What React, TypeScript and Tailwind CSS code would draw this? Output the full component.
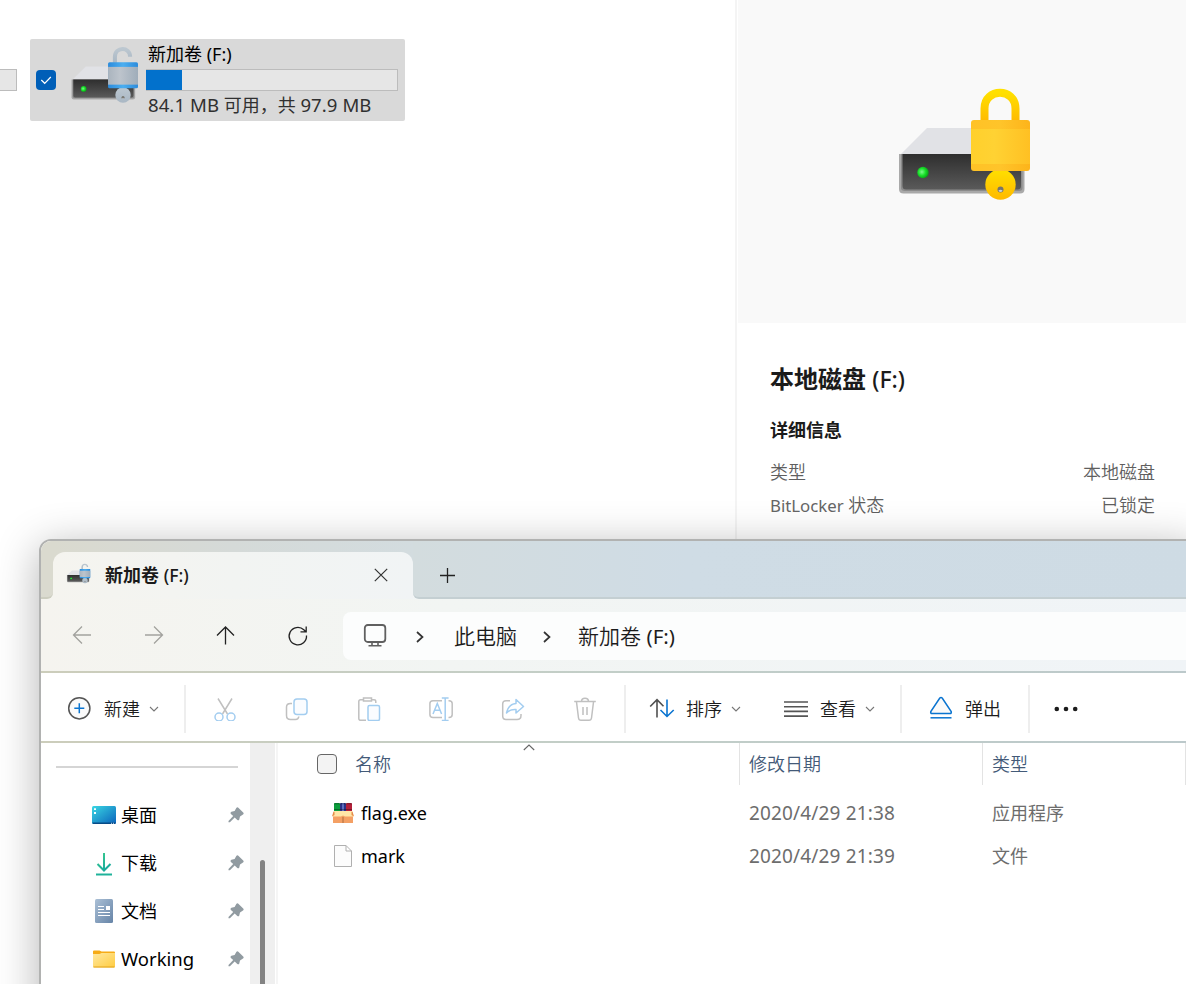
import type { ReactNode } from "react";

const FONT = "font-['Noto_Sans','Noto_Sans_CJK_SC',sans-serif]";

/* Latin runs have their own size next to the Chinese glyphs. */
function L({ children, className = "text-[0.98em] font-normal" }: { children: ReactNode; className?: string }) {
  return <span className={className}>{children}</span>;
}

function DriveIcon({ id, open, className }: { id: string; open: boolean; className: string }) {
  return (
    <svg viewBox="16 16 136 118" className={className} fill="none">
      <defs>
        <linearGradient id={`${id}-b`} x1="0" y1="0" x2="0" y2="1">
          <stop offset="0" stopColor="#2e2e2e" />
          <stop offset="1" stopColor="#5a5a5a" />
        </linearGradient>
        <linearGradient id={`${id}-s`} x1="0" y1="0" x2="0" y2="1">
          <stop offset="0" stopColor={open ? "#bcc7d0" : "#ffe000"} />
          <stop offset="1" stopColor={open ? "#a9b7c4" : "#ffb900"} />
        </linearGradient>
        <linearGradient id={`${id}-l`} x1="0" y1="0" x2="1" y2="0">
          <stop offset="0" stopColor={open ? "#aab4be" : "#ffd02c"} />
          <stop offset="0.4" stopColor={open ? "#bdc4cc" : "#ffd233"} />
          <stop offset="1" stopColor={open ? "#9fadba" : "#ffc023"} />
        </linearGradient>
        <linearGradient id={`${id}-e`} x1="0" y1="0" x2="1" y2="0">
          <stop offset="0" stopColor={open ? "#2b8bdc" : "#ffc226"} />
          <stop offset="0.5" stopColor={open ? "#4baef0" : "#ffc42a"} />
          <stop offset="1" stopColor={open ? "#2b8bdc" : "#fdb41a"} />
        </linearGradient>
        <radialGradient id={`${id}-d`} cx="0.4" cy="0.45" r="0.6">
          <stop offset="0" stopColor="#7dfa8a" />
          <stop offset="0.55" stopColor="#17df28" />
          <stop offset="1" stopColor="#0c9c18" />
        </radialGradient>
      </defs>
      <path d="M47 58H120L143 84H21Z" fill="#e1e2e6" />
      <path d="M19 84H144.500V119Q144.500 123.500 140 123.500H23.500Q19 123.500 19 119Z" fill="#a9a9a9" />
      <path d="M21 84H142.500V118Q142.500 121 139 121H25Q21 121 21 118Z" fill="#8b8b8b" />
      <path d="M22.500 84H141V116Q141 119.500 137.500 119.500H26Q22.500 119.500 22.500 116Z" fill={`url(#${id}-b)`} />
      <circle cx="43" cy="102.500" r="5.700" fill={`url(#${id}-d)`} />
      {open ? (
        <path d="M104.500 51V39.500C104.500 18.500 134.500 18.500 134.500 39" stroke={`url(#${id}-s)`} strokeWidth="8" />
      ) : (
        <path d="M104.500 52V38.500C104.500 17.500 135.500 17.500 135.500 38.500V52" stroke={`url(#${id}-s)`} strokeWidth="8" />
      )}
      <circle cx="120.500" cy="114.500" r="15.200" fill={`url(#${id}-s)`} />
      <circle cx="120.500" cy="119.500" r="3" fill="#75736c" />
      <path d="M118.300 120.800Q120.500 118.700 122.700 120.800Q120.500 123.300 118.300 120.800" fill="#cbd0d8" />
      <rect x="91" y="50" width="59" height="51" rx="3" fill={`url(#${id}-e)`} />
      <path d="M91 59H150V94H91Z" fill={`url(#${id}-l)`} />
    </svg>
  );
}

function Chevron({ className }: { className: string }) {
  return (
    <svg viewBox="0 0 10 10" className={className} fill="none" stroke="#777" strokeWidth="1.100">
      <path d="M1 3L5 7L9 3" />
    </svg>
  );
}

function Pin() {
  return (
    <svg viewBox="0 0 16 16" className="ml-auto h-4 w-4 shrink-0" fill="#919ba1">
      <path d="M8.300 0.900Q9.400 -0.300 10.600 0.900L15.200 5.400Q16.200 6.600 15 7.400L12 9.400L11.200 12.700Q10.500 13.900 9.300 12.900L6.700 10.600L1.900 15.300H0.500V13.900L5.200 9.100L2.900 6.900Q2 5.500 3.400 4.800L6.600 4Z" />
    </svg>
  );
}

function SideItem({ icon, children }: { icon: ReactNode; children: ReactNode }) {
  return (
    <div className="flex h-12 items-center pl-[51px] pr-[6px]">
      <div className="flex w-6 shrink-0 justify-center">{icon}</div>
      <div className="ml-[5px] text-[18px] leading-[20px] text-black">{children}</div>
      <Pin />
    </div>
  );
}

const Desktop = () => (
  <svg viewBox="0 0 24 18" className="h-[18px] w-6">
    <defs>
      <linearGradient id="desk" x1="0" y1="0" x2="1" y2="1">
        <stop offset="0" stopColor="#3ad7e3" />
        <stop offset="1" stopColor="#0a62bb" />
      </linearGradient>
    </defs>
    <rect width="24" height="18" rx="1.500" fill="url(#desk)" />
    <path d="M0.500 16.500H23.500V17Q23.500 18 22.500 18H1.500Q0.500 18 0.500 17Z" fill="#084b86" />
    <path d="M2 2.200H4V4H2ZM2 6H4V8H2Z" fill="#f4ffff" />
    <path d="M19 17.300H20M21 17.300H22" stroke="#fff" strokeWidth="0.800" />
  </svg>
);

const Download = () => (
  <svg viewBox="0 0 18 24" className="mt-px h-6 w-[18px]" fill="none" strokeWidth="2">
    <defs>
      <linearGradient id="down" x1="0" y1="0" x2="18" y2="24" gradientUnits="userSpaceOnUse">
        <stop offset="0" stopColor="#3fd08a" />
        <stop offset="1" stopColor="#089aa5" />
      </linearGradient>
    </defs>
    <path d="M9.010 1L9 18M2.500 12L9 18.500L15.500 12" stroke="url(#down)" />
    <path d="M1 21.500H17V23.500H1Z" fill="#1fb29a" />
  </svg>
);

const Document = () => (
  <svg viewBox="0 0 18 24" className="h-6 w-[18px]">
    <defs>
      <linearGradient id="doc" x1="0" y1="0" x2="1" y2="1">
        <stop offset="0" stopColor="#abc0d6" />
        <stop offset="1" stopColor="#6684a7" />
      </linearGradient>
    </defs>
    <rect width="18" height="24" rx="1.500" fill="url(#doc)" />
    <path d="M3 7.500H9M3 10.500H9M3 13.500H15M3 16.500H15" stroke="#fff" strokeWidth="1.100" />
    <rect x="11" y="7" width="4" height="4" fill="#fff" />
  </svg>
);

const Folder = () => (
  <svg viewBox="0 0 22 18" className="h-[18px] w-[22px]">
    <defs>
      <linearGradient id="fold" x1="0" y1="0" x2="1" y2="1">
        <stop offset="0" stopColor="#ffe8a0" />
        <stop offset="1" stopColor="#ffcc40" />
      </linearGradient>
    </defs>
    <path d="M0 1.500Q0 0.500 1 0.500H6.500L8.500 1.500H21Q22 1.500 22 2.500V16H0Z" fill="#f6ab16" />
    <path d="M0 4H6.500L8.500 3H22V16.500Q22 17.500 21 17.500H1Q0 17.500 0 16.500Z" fill="url(#fold)" />
    <path d="M0.500 17H21.500" stroke="#e1a21d" />
  </svg>
);

const Archive = () => (
  <svg viewBox="0 0 22 20" className="h-5 w-[22px]">
    <rect x="2" y="0" width="6" height="10" rx="1" fill="#0b9d3c" />
    <rect x="8" y="0" width="6" height="10" rx="1" fill="#2b3287" />
    <rect x="10" y="0" width="2" height="10" fill="#5d6ec0" />
    <rect x="14" y="0" width="6" height="10" rx="1" fill="#b4203a" />
    <path d="M2 0.800H20M2 6.500H20" stroke="#000" strokeOpacity="0.300" />
    <path d="M1 12H21V20H1Z" fill="#f4a064" />
    <path d="M2 8H20L21.500 13.500H13L11 12.500L9 13.500H0.500Z" fill="#ffe6a8" />
    <path d="M0 13.500L1.500 8.500L2.500 9V12ZM22 13.500L20.500 8.500L19.500 9V12Z" fill="#e78b48" />
    <path d="M11 14V20" stroke="#ad6c3d" />
  </svg>
);

const FileIcon = () => (
  <svg viewBox="0 0 18 22" className="h-[22px] w-[18px]" fill="#fcfcfc" stroke="#b0b0b0">
    <path d="M0.500 0.500H12L17.500 6V21.500H0.500ZM12 0.500V6H17.500" />
  </svg>
);

function IconCell({ children }: { children: ReactNode }) {
  return (
    <div className="flex w-[72px] shrink-0 justify-center">
      <svg viewBox="0 0 24 24" className="h-6 w-6" fill="none" strokeWidth="1.500" stroke="#c0c0c0">
        {children}
      </svg>
    </div>
  );
}

const Divider = () => <div className="h-12 w-[2px] shrink-0 bg-[#eeeeee]" />;

function FileRow({ icon, name, date, type }: { icon: ReactNode; name: string; date: string; type: string }) {
  return (
    <div className="flex h-[43px] items-center text-[18px] leading-[20px] text-[#6d6d6d]">
      <div className="flex w-[29px] shrink-0 justify-center pt-px">{icon}</div>
      <div className="ml-[4px] w-[388px] text-black"><L className="text-[18px]">{name}</L></div>
      <div className="w-[243px]"><L className="text-[19px] tracking-[0.15px]">{date}</L></div>
      <div>{type}</div>
    </div>
  );
}

function DriveTile() {
  return (
    <div className="flex h-[82px] w-[375px] rounded-[2px] bg-[#d9d9d9]">
      <div className="ml-[6px] mt-[31px] flex h-5 w-5 items-center justify-center rounded-[4px] bg-[#005fb8]">
        <svg viewBox="0 0 12 10" className="h-[10px] w-3" fill="none" stroke="#fff" strokeWidth="1.200">
          <path d="M1.300 5L4.700 8.300L10.800 2" />
        </svg>
      </div>
      <DriveIcon id="tile" open className="ml-[14px] mt-[6px] h-[60px] w-[69px]" />
      <div className="ml-[7px] flex flex-col">
        <div className="ml-[2px] mt-[6px] h-[18px] text-[18px] leading-[18px] text-black">新加卷 <L className="text-[18px]">(F:)</L></div>
        <div className="mt-[6px] h-[22px] w-[252px] border border-[#bcbcbc] border-l-0 bg-[#e6e6e6]">
          <div className="h-full w-9 bg-[#0271cc]" />
        </div>
        <div className="ml-[2px] mt-[5px] text-[18px] leading-[18px] whitespace-nowrap text-[#303030]">
          <L className="text-[18.600px] tracking-[0.05px]">84.1 MB</L> 可用，共 <L className="text-[18.600px] tracking-[0.05px]">97.9 MB</L>
        </div>
      </div>
    </div>
  );
}

function DetailsPane() {
  return (
    <div className="flex w-[451px] shrink-0 flex-col border-l-2 border-[#f4f4f4]">
      <div className="ml-px flex h-[323px] bg-[#f9f9f9]">
        <DriveIcon id="big" open={false} className="ml-[158px] mt-[86px] h-[118px] w-[136px]" />
      </div>
      <div className="ml-[33px] mr-[31px] flex flex-col">
        <div className="mt-[44px] text-[24px] leading-[24px] font-bold text-[#1b1b1b]">
          本地磁盘 <L className="text-[23px] font-medium">(F:)</L>
        </div>
        <div className="mt-[30px] text-[18px] leading-[18px] font-bold text-[#1b1b1b]">详细信息</div>
        <div className="mt-[24px] flex justify-between text-[18px] leading-[18px] font-[350] text-[#5f5f5f]">
          <span>类型</span>
          <span>本地磁盘</span>
        </div>
        <div className="mt-[15px] flex justify-between text-[18px] leading-[18px] font-[350] text-[#5f5f5f]">
          <span><L className="text-[16.800px] font-normal text-[#666]">BitLocker</L> 状态</span>
          <span>已锁定</span>
        </div>
      </div>
    </div>
  );
}

function TitleBar() {
  return (
    <div className="flex h-[58px] shrink-0 overflow-hidden rounded-tl-[10px] bg-linear-to-r from-[#f5f4ef] via-[#f1f5f6] via-35% to-[#f0f4f7]">
      <div className="w-3 shrink-0 rounded-br-[6px] border-b-2 border-[#cccdbf] bg-[#dadacf]" />
      <div className="w-[360px] shrink-0 bg-[linear-gradient(to_right,#dadacf,#d5dad8_50%,#d3dcdf)] pt-[11px]">
        <div className="flex h-[47px] items-center rounded-t-[12px] bg-linear-to-r from-[#f5f4ef] via-[#f2f4f2] to-[#f1f4f5] pl-[13px]">
          <DriveIcon id="tab" open className="h-[21px] w-[25px] -translate-y-[2px]" />
          <div className="ml-[14px] text-[18px] leading-none font-bold text-[#1a1a1a]">
            新加卷 <L className="text-[17.600px] font-medium">(F:)</L>
          </div>
          <svg viewBox="0 0 14 14" className="mr-[25px] mb-[2px] ml-auto h-[14px] w-[14px]" fill="none" stroke="#333" strokeWidth="1.200">
            <path d="M0.800 0.800L13.200 13.200M13.200 0.800L0.800 13.200" />
          </svg>
        </div>
      </div>
      <div className="flex grow items-center rounded-bl-[6px] border-b-2 border-[#c4cfd2] bg-[linear-gradient(to_right,#d3dcde,#cfdce5_35%,#cedbe4)] pt-[12px] pl-[26px]">
        <svg viewBox="0 0 16 16" className="h-4 w-4" fill="none" stroke="#222" strokeWidth="1.300">
          <path d="M8.500 1V16M1 8.500H16" />
        </svg>
      </div>
    </div>
  );
}

function NavBar() {
  return (
    <div className="flex h-[72px] shrink-0 items-center bg-linear-to-r from-[#f5f4ef] via-[#f2f5f3] via-35% to-[#f0f4f7] pt-[2px]">
      <svg viewBox="0 0 240 24" className="mb-[3px] ml-[31px] h-6 w-60" fill="none" stroke="#222" strokeWidth="1.300">
        <g stroke="#a2a29e">
          <path d="M19 12H1.500M10 3.500L1.500 12L10 20.500" />
          <path d="M73 12H90.500M82 3.500L90.500 12L82 20.500" />
        </g>
        <path d="M153.500 21.500V4M145 12.500L153.500 4L162 12.500" />
        <path d="M234.500 12.500A8.700 8.700 0 1 1 231.800 6.800L234 8.800M234.200 3.500V8.800H228.500" />
      </svg>
      <div className="ml-[31px] flex h-12 grow items-center rounded-l-[8px] bg-[#fcfdfd] text-[21px] leading-none font-[350] text-[#1c1c1c]">
        <svg viewBox="0 0 24 24" className="mb-[2px] ml-[20px] h-6 w-6" fill="none" stroke="#606060" strokeWidth="1.800">
          <rect x="1.800" y="2" width="20.500" height="17" rx="3" />
          <path d="M9 19V22.500M15 19V22.500M5.500 22.700H18.500" strokeWidth="1.600" />
        </svg>
        <svg viewBox="0 0 8 12" className="mt-px ml-[29px] h-3 w-2" fill="none" stroke="#333" strokeWidth="1.700">
          <path d="M1 1L6.500 6L1 11" />
        </svg>
        <span className="ml-[30px]">此电脑</span>
        <svg viewBox="0 0 8 12" className="mt-px ml-[26px] h-3 w-2" fill="none" stroke="#333" strokeWidth="1.700">
          <path d="M1 1L6.500 6L1 11" />
        </svg>
        <span className="ml-[27px]">新加卷 <L>(F:)</L></span>
      </div>
    </div>
  );
}

function Toolbar() {
  return (
    <div className="flex h-[67px] shrink-0 items-center bg-white pt-[4px] text-[18px] leading-none font-[350] whitespace-nowrap text-[#1c1c1c]">
      <div className="flex w-[143px] shrink-0 items-center">
        <svg viewBox="0 0 24 24" className="mb-[2px] ml-[26px] h-6 w-6" fill="none" strokeWidth="1.500">
          <circle cx="12.300" cy="12.300" r="10.600" stroke="#555" fill="#fafafa" />
          <path d="M12.300 7.300V17.300M7.300 12.300H17.300" stroke="#0a74d0" />
        </svg>
        <span className="ml-[13px]">新建</span>
        <Chevron className="ml-[9px] h-[10px] w-[10px]" />
      </div>
      <Divider />
      <div className="flex w-[438px] shrink-0 pl-[3px]">
        <IconCell>
          <path d="M5 1.500L14.500 17M19 1.500L9.500 17" />
          <circle cx="6" cy="20" r="4" stroke="#a3cdf0" />
          <circle cx="18" cy="20" r="4" stroke="#a3cdf0" />
        </IconCell>
        <IconCell>
          <path d="M7 6.500H5.500Q1.500 6.500 1.500 10V18.500Q1.500 22.500 5.500 22.500H10.500Q13.500 22.500 13.800 19.500" />
          <rect x="9" y="2" width="13" height="15.500" rx="3" stroke="#a3cdf0" fill="#fafcff" />
        </IconCell>
        <IconCell>
          <path d="M9 23.300H3.500Q1.800 23.300 1.800 21.500V4.500Q1.800 2.800 3.500 2.800H6.500M14.500 2.800H17Q18.800 2.800 18.800 4.500V6M6.500 4V1H14.500V4Z" />
          <rect x="11" y="8.500" width="11.500" height="15" rx="1.500" stroke="#a3cdf0" fill="#fafcff" />
        </IconCell>
        <IconCell>
          <path d="M13 20.500H4Q0.900 20.500 0.900 17.500V6.500Q0.900 3.700 4 3.700H13M19.500 3.700H20Q23.200 3.700 23.200 6.500V17.500Q23.200 20.500 20 20.500H19.500" />
          <path d="M4 17L8.300 6.500L12.600 17M5.500 13.300H11.200M16.200 1V23.500M12.800 0.900H19.600M12.800 23.500H19.600" stroke="#a3cdf0" />
        </IconCell>
        <IconCell>
          <path d="M9 3.800H5Q1.700 3.800 1.700 7V19Q1.700 22.500 5 22.500H16Q20 22.500 20 18.500V17" />
          <path d="M15 2.500L22.500 9.500L15 16V12.500Q9 12 5.500 16Q7.500 7 15 6.500Z" stroke="#a3cdf0" strokeLinejoin="round" />
        </IconCell>
        <IconCell>
          <path d="M1.200 4.500H22.800M8.500 4.500Q8.500 1.200 12 1.200Q15.500 1.200 15.500 4.500M3.500 5L5.500 21Q5.800 23.200 8 23.200H16Q18.200 23.200 18.500 21L20.500 5M10 10V18M14 10V18" />
        </IconCell>
      </div>
      <Divider />
      <svg viewBox="0 0 26 24" className="mb-[2px] ml-[23px] h-6 w-[26px]" fill="none" strokeWidth="1.600">
        <path d="M8 21.500V4M1.200 10.500L8 3.700L14.500 10.300" stroke="#505050" />
        <path d="M18 3.500V20.500M11.500 14L18 20.500L24.700 14" stroke="#0a74d0" />
      </svg>
      <span className="ml-[11px]">排序</span>
      <Chevron className="ml-[9px] h-[10px] w-[10px]" />
      <svg viewBox="0 0 24 18" className="ml-[43px] h-[18px] w-6" stroke="#555" strokeWidth="1.600">
        <path d="M0 2H24M0 6.700H24M0 11.400H24M0 16.100H24" />
      </svg>
      <span className="ml-[12px]">查看</span>
      <Chevron className="ml-[9px] h-[10px] w-[10px]" />
      <div className="ml-[25px] flex w-[154px] items-center">
        <Divider />
        <svg viewBox="0 0 24 24" className="mb-[2px] ml-[27px] h-6 w-6" fill="#fafafa" stroke="#0a74d0" strokeWidth="1.500">
          <path d="M10.800 2Q12 0.800 13.200 2L22.200 15.500Q22.700 17.500 21 17.500H3Q1.300 17.500 1.800 15.500Z" />
          <path d="M1.500 21.800H22.500" />
        </svg>
        <span className="ml-[12px]">弹出</span>
      </div>
      <div className="-ml-[26px]"><Divider /></div>
      <svg viewBox="0 0 24 6" className="mt-px ml-[24px] h-[6px] w-6 shrink-0" fill="#1c1c1c">
        <circle cx="2.800" cy="3" r="2.300" />
        <circle cx="12" cy="3" r="2.300" />
        <circle cx="21.200" cy="3" r="2.300" />
      </svg>
    </div>
  );
}

function Sidebar() {
  return (
    <div className="flex w-[209px] shrink-0 flex-col bg-white">
      <div className="mt-[23px] mb-[23px] ml-[15px] h-[2px] w-[182px] shrink-0 bg-[#d5d5d5]" />
      <SideItem icon={<Desktop />}>桌面</SideItem>
      <SideItem icon={<Download />}>下载</SideItem>
      <SideItem icon={<Document />}>文档</SideItem>
      <SideItem icon={<Folder />}><L className="text-[18.500px]">Working</L></SideItem>
    </div>
  );
}

function FileList() {
  return (
    <div className="flex grow flex-col bg-white">
      <div className="flex h-[42px] shrink-0 text-[18px] leading-[18px] font-[350] text-[#435a78]">
        <div className="relative flex w-[462px] border-r border-[#e3e3e3]">
          <div className="mt-[11px] ml-[39px] h-5 w-5 rounded-[4px] border-[1.500px] border-[#666] bg-[#f3f3f3]" />
          <span className="mt-[12px] ml-[18px]">名称</span>
          <svg viewBox="0 0 12 7" className="absolute top-[1px] left-[245px] h-[7px] w-3" fill="none" stroke="#666" strokeWidth="1.100">
            <path d="M0.800 6L6 1L11.200 6" />
          </svg>
        </div>
        <div className="w-[243px] border-r border-[#e3e3e3] pt-[12px] pl-[9px]">修改日期</div>
        <div className="w-[203px] border-r border-[#e3e3e3] pt-[12px] pl-[9px]">类型</div>
      </div>
      <div className="mt-[6px] ml-[50px] flex flex-col">
        <FileRow icon={<Archive />} name="flag.exe" date="2020/4/29 21:38" type="应用程序" />
        <FileRow icon={<FileIcon />} name="mark" date="2020/4/29 21:39" type="文件" />
      </div>
    </div>
  );
}

export default function App() {
  return (
    <div className={`flex h-[984px] w-[1186px] flex-col overflow-hidden bg-white ${FONT}`}>
      <div className="flex h-[539px] shrink-0">
        <div className="flex grow items-start pt-[39px]">
          <div className="mt-[30px] mr-[13px] h-[22px] w-[17px] border border-l-0 border-[#bcbcbc] bg-[#e6e6e6]" />
          <DriveTile />
        </div>
        <DetailsPane />
      </div>
      <div className="relative ml-[39px] flex h-[500px] w-[1160px] shrink-0 flex-col overflow-visible rounded-tl-[12px] border-2 border-[#b1b2b1] bg-white shadow-[0_8px_44px_rgba(0,0,0,0.3)]">
        <TitleBar />
        <NavBar />
        <div className="h-[2px] shrink-0 bg-linear-to-r from-[#cccdbb] via-[#c2cec8] to-[#bcc9cb]" />
        <Toolbar />
        <div className="mt-px h-[2px] shrink-0 bg-linear-to-r from-[#cccdbb] via-[#c2cec8] to-[#bcc9cb]" />
        <div className="flex grow">
          <Sidebar />
          <div className="flex w-[28px] shrink-0 border-r-2 border-[#f5f5f5]">
            <div className="w-[25px] bg-[#efefef] pt-[117px] pl-[10px]">
              <div className="h-[300px] w-[5px] rounded-full bg-[#838383]" />
            </div>
          </div>
          <FileList />
        </div>
      </div>
    </div>
  );
}
